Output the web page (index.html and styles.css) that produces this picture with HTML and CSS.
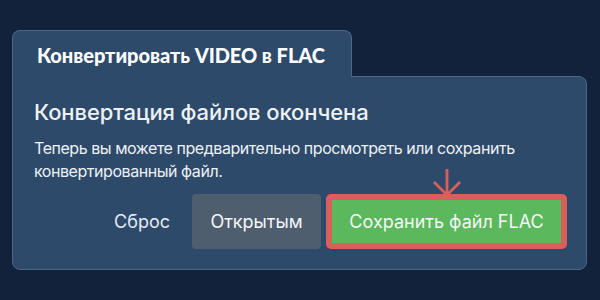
FILE: index.html
```html
<!DOCTYPE html>
<html lang="ru">
<head>
  <meta charset="UTF-8">
  <title>Конвертировать VIDEO в FLAC</title>
  <link rel="stylesheet" href="styles.css">
</head>
<body>
<div class="converter">
  <div class="tab">Конвертировать VIDEO в FLAC</div>
  <div class="panel">
    <h2 class="done-title">Конвертация файлов окончена</h2>
    <p class="done-text">Теперь вы можете предварительно просмотреть или сохранить конвертированный файл.</p>
    <div class="actions">
      <span class="reset">Сброс</span>
      <button class="btn btn-open">Открытым</button>
      <button class="btn btn-save">
        <svg class="hint-arrow" width="34" height="28" viewBox="0 0 34 28">
          <path d="M17 0 V26 M4 13 L17 26 L30 13" fill="none" stroke="#d9605a" stroke-width="2.8"/>
        </svg>
        Сохранить файл FLAC
      </button>
    </div>
  </div>
</div>
</body>
</html>
```

FILE: styles.css
```css
html,body,div,h2,p{margin:0;padding:0;}
body{background:#11223a;font-family:Inter,"Noto Sans",sans-serif;color:#eef1f4;}
.converter{padding:30px 13px 0 12px;}
.tab{position:relative;z-index:1;width:314px;height:46px;margin-bottom:-1px;padding-left:24px;box-sizing:content-box;background:#2d4a6b;border:1px solid #4c6888;border-bottom:none;border-radius:8px 8px 0 0;font:900 20px/48px Lato,sans-serif;letter-spacing:-0.05px;color:#fff;}
.panel{background:#2d4a6b;border:1px solid #4c6888;border-radius:0 8px 8px 8px;padding:21px 19px 20px 21px;}
.done-title{font-size:22px;font-weight:500;line-height:29px;letter-spacing:-0.1px;}
.done-text{margin-top:10px;font-size:16px;line-height:23px;letter-spacing:-0.45px;width:510px;}
.actions{display:flex;align-items:center;justify-content:flex-end;margin-top:11px;}
.reset{font-size:18px;margin-right:22px;color:#e6eaef;}
.btn{font-family:Inter,"Noto Sans",sans-serif;font-size:18px;color:#f4f6f8;border:none;border-radius:4px;height:55px;cursor:pointer;}
.btn-open{background:#4f5e6e;width:129px;margin-right:5px;}
.btn-save{position:relative;background:#5cb85c;border:6px solid #d9605a;width:241px;border-radius:5px;}
.hint-arrow{position:absolute;left:50%;bottom:100%;margin-left:-17px;margin-bottom:3px;}
```
